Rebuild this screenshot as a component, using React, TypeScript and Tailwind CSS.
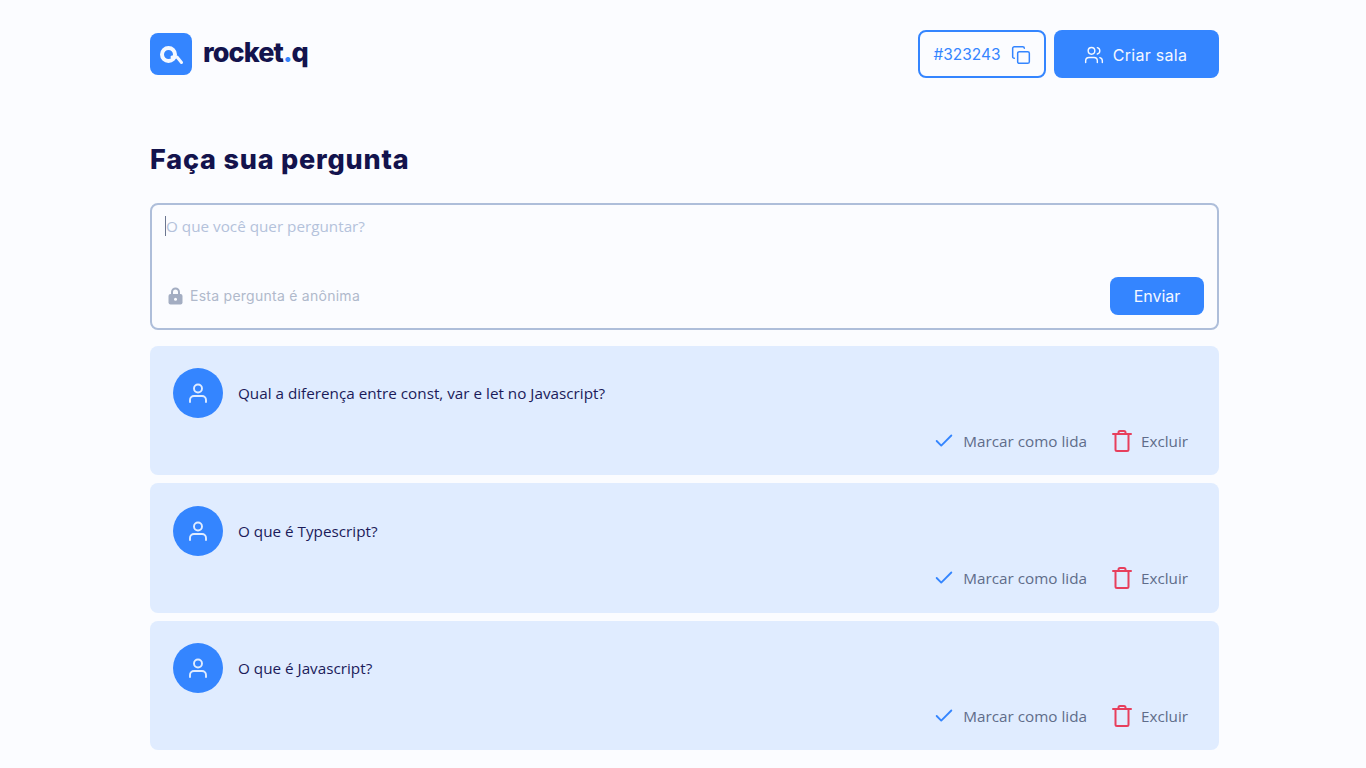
import { Check, Copy, Users } from "lucide-react";

const questions = [
  "Qual a diferença entre const, var e let no Javascript?",
  "O que é Typescript?",
  "O que é Javascript?",
];

const poppins = "font-['Inter','Noto_Sans',sans-serif]";

function TrashIcon() {
  return (
    <svg className="ml-[24px]" width="22" height="24" viewBox="0 0 22 24" fill="none" stroke="#E73F5D" strokeWidth="2" strokeLinecap="round" strokeLinejoin="round">
      <path d="M2 5h18" />
      <path d="M7.5 5V3.5a1.5 1.5 0 0 1 1.5-1.5h4a1.5 1.5 0 0 1 1.5 1.5V5" />
      <path d="M4.5 5v15.5a1.5 1.5 0 0 0 1.5 1.5h10a1.5 1.5 0 0 0 1.5-1.5V5" />
    </svg>
  );
}

function QuestionCard({ text }: { text: string }) {
  return (
    <li className="h-[129.5px] rounded-lg bg-[#E0ECFF] pt-[22.5px] pl-[23px] pr-[31px] flex flex-col">
      <div className="flex items-center gap-[15px]">
        <div className="size-[50px] rounded-full bg-[#3485FF] flex items-center justify-center">
          <svg width="24" height="24" viewBox="0 0 24 24" fill="none" stroke="#E0ECFF" strokeWidth="1.9" strokeLinecap="round">
            <circle cx="12" cy="7.5" r="4" />
            <path d="M4 21v-2a4 4 0 0 1 4-4h8a4 4 0 0 1 4 4v2" />
          </svg>
        </div>
        <p className="text-[#1B1B5A] text-[15.25px] leading-5 font-['Open_Sans',sans-serif]">{text}</p>
      </div>
      <div className="flex justify-end items-center mt-[10.5px] text-[15.25px] leading-5 text-[#5F6C8A] font-['Open_Sans',sans-serif]">
        <Check className="size-[22px] text-[#3485FF]" strokeWidth={2} />
        <span className="ml-[8px]">Marcar como lida</span>
        <TrashIcon />
        <span className="ml-[8px]">Excluir</span>
      </div>
    </li>
  );
}

export default function App() {
  return (
    <div className="min-h-[768px] w-full bg-[#FBFCFF] pl-[150px] pr-[147px] pt-[30px] overflow-hidden">
      <header className="flex items-center justify-between h-[48px]">
        <div className="flex items-center gap-[11px]">
          <div className="size-[42px] rounded-lg bg-[#3485FF]">
            <svg width="42" height="42" viewBox="0 0 42 42" fill="none" stroke="#F4F8FF" strokeLinecap="round" strokeLinejoin="round">
              <circle cx="18.5" cy="21.5" r="6.5" strokeWidth="4" />
              <path d="M22 24h5l4.5 5.5" strokeWidth="3" />
            </svg>
          </div>
          <span className={`-mt-[3px] text-[27px] leading-none font-extrabold tracking-[-0.9px] text-[#13134D] ${poppins}`}>
            rocket<span className="text-[#3485FF]">.</span>q
          </span>
        </div>
        <div className={`flex gap-[8px] ${poppins}`}>
          <button className="h-[48px] w-[128px] rounded-lg border-2 border-[#3485FF] flex items-center justify-center gap-[10px] text-[#3485FF] text-[15.5px] pt-[1px]">
            #323243
            <Copy className="size-[20px]" strokeWidth={1.8} />
          </button>
          <button className="h-[48px] w-[165px] rounded-lg bg-[#3485FF] flex items-center justify-center gap-[9px] text-[#F4F8FF] text-[16px] tracking-[0.3px] pt-[1px] pr-[2px]">
            <Users className="size-[20px]" strokeWidth={1.7} />
            Criar sala
          </button>
        </div>
      </header>

      <h1 className={`mt-[63px] text-[27px] leading-[38px] font-extrabold tracking-[0.8px] text-[#13134D] ${poppins}`}>Faça sua pergunta</h1>

      <form className="mt-[24px] h-[127px] rounded-lg border-2 border-[#AEBEDA] flex flex-col pl-[13px] pr-[13px] pt-[11px] pb-[13px]">
        <p className="text-[15.25px] leading-5 text-[#B4C2DB] font-['Open_Sans',sans-serif] border-l border-[#6B7690] w-fit">O que você quer perguntar?</p>
        <div className="mt-auto flex items-center justify-between">
          <div className={`flex items-center gap-[7px] pl-[3px] text-[14px] leading-5 tracking-[0.26px] text-[#B0B9CB] ${poppins}`}>
            <svg width="15" height="18" viewBox="0 0 15 18">
              <path d="M4 8V5a3.5 3.5 0 0 1 7 0v3" fill="none" stroke="#A3ADC2" strokeWidth="2" />
              <rect x="0.5" y="7" width="14" height="10.5" rx="2" fill="#A3ADC2" />
              <circle cx="7.5" cy="12.2" r="1.5" fill="#FBFCFF" />
            </svg>
            Esta pergunta é anônima
          </div>
          <button type="button" className={`h-[38px] w-[94px] rounded-lg bg-[#3485FF] text-[#F4F8FF] text-[16px] ${poppins}`}>
            Enviar
          </button>
        </div>
      </form>

      <ul className="mt-[15.5px] flex flex-col gap-[8px]">
        {questions.map((q) => (
          <QuestionCard key={q} text={q} />
        ))}
      </ul>
    </div>
  );
}
